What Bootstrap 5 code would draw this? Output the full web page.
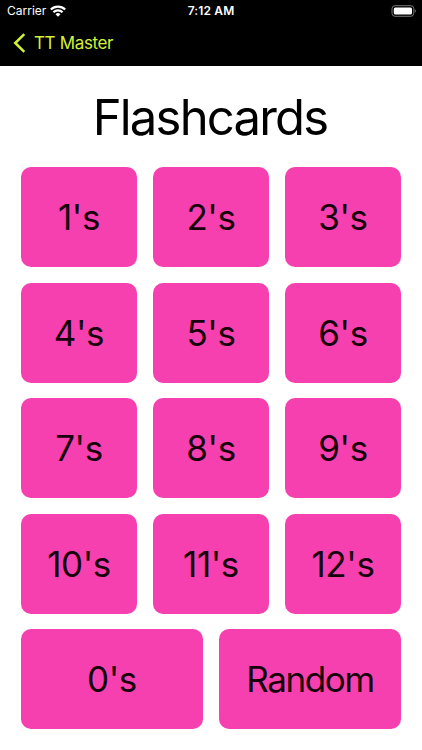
<!DOCTYPE html>
<html lang="en">
<head>
<meta charset="utf-8">
<meta name="viewport" content="width=device-width, initial-scale=1">
<title>Flashcards</title>
<link href="https://cdn.jsdelivr.net/npm/bootstrap@5.3.0/dist/css/bootstrap.min.css" rel="stylesheet">
<style>
body { font-family: Inter, "Liberation Sans", sans-serif; height: 750px; overflow: hidden; }
.topbar { height: 65.6px; background: #000; }
.status { height: 22px; padding: 0 7px 0 7px; font-size: 12px; }
.status-side { flex: 1 1 0; }
.status-battery { margin-right: -1px; }
.clock { font-weight: 600; letter-spacing: .15px; }
.back-link { height: 43px; padding-left: 13px; gap: 8px; color: #d3f236; font-size: 17px; letter-spacing: -.35px; }
.back-link svg { margin-bottom: 2px; }
.screen-title { height: 101.7px; padding: 3px 2px 0 0; font-size: 49px; letter-spacing: -1.8px; }
.deck { padding: 0 20.7px; gap: 15.4px; }
.deck-row { gap: 15.4px; }
.deck-btn { flex: 1 1 0; height: 100.1px; padding: 1px 0 0; border: 0; border-radius: 10px; background: #f740b0; color: #16000c; font-size: 35px; line-height: 1; letter-spacing: -.4px; }
.deck-btn:hover { background: #e5319f; color: #16000c; }
.deck-btn-word { letter-spacing: -1.4px; }
</style>
</head>
<body class="bg-white text-black">
<header class="topbar">
  <div class="status d-flex align-items-center text-white">
    <div class="status-side d-flex align-items-center gap-1">
      <span>Carrier</span>
      <svg width="16" height="12" viewBox="0 0 15 11" fill="none" stroke="#fff" stroke-width="2.1" aria-hidden="true"><path d="M.8 4.1a9.6 9.6 0 0 1 13.4 0M3.2 6.7a6.2 6.2 0 0 1 8.6 0"/><path d="M7.5 10.8 5.2 8.5a3.3 3.3 0 0 1 4.6 0z" fill="#fff" stroke="none"/></svg>
    </div>
    <span class="clock">7:12 AM</span>
    <div class="status-side d-flex align-items-center justify-content-end">
      <svg class="status-battery" width="26" height="12" viewBox="0 0 26 12" aria-hidden="true"><rect x="2" y=".7" width="21.8" height="10.6" rx="3" fill="none" stroke="#777"/><rect x="3.8" y="2.4" width="18.2" height="7.2" rx="1.5" fill="#fff"/><path d="M24.8 4.2q1.1.6 1.1 1.8t-1.1 1.8z" fill="#777"/></svg>
    </div>
  </div>
  <a href="#" class="back-link d-inline-flex align-items-center text-decoration-none">
    <svg width="13" height="20" viewBox="0 0 13 20" fill="none" stroke="currentColor" stroke-width="2.5" aria-hidden="true"><path d="M11.3 1.2 2.2 10l9.1 8.8"/></svg>
    <span>TT Master</span>
  </a>
</header>
<main>
  <h1 class="screen-title d-flex align-items-center justify-content-center m-0 fw-normal">Flashcards</h1>
  <div class="deck d-flex flex-column">
    <div class="deck-row d-flex"><button class="deck-btn btn">1's</button><button class="deck-btn btn">2's</button><button class="deck-btn btn">3's</button></div>
    <div class="deck-row d-flex"><button class="deck-btn btn">4's</button><button class="deck-btn btn">5's</button><button class="deck-btn btn">6's</button></div>
    <div class="deck-row d-flex"><button class="deck-btn btn">7's</button><button class="deck-btn btn">8's</button><button class="deck-btn btn">9's</button></div>
    <div class="deck-row d-flex"><button class="deck-btn btn">10's</button><button class="deck-btn btn">11's</button><button class="deck-btn btn">12's</button></div>
    <div class="deck-row d-flex"><button class="deck-btn btn">0's</button><button class="deck-btn deck-btn-word btn">Random</button></div>
  </div>
</main>
<script src="https://cdn.jsdelivr.net/npm/bootstrap@5.3.0/dist/js/bootstrap.bundle.min.js"></script>
</body>
</html>
